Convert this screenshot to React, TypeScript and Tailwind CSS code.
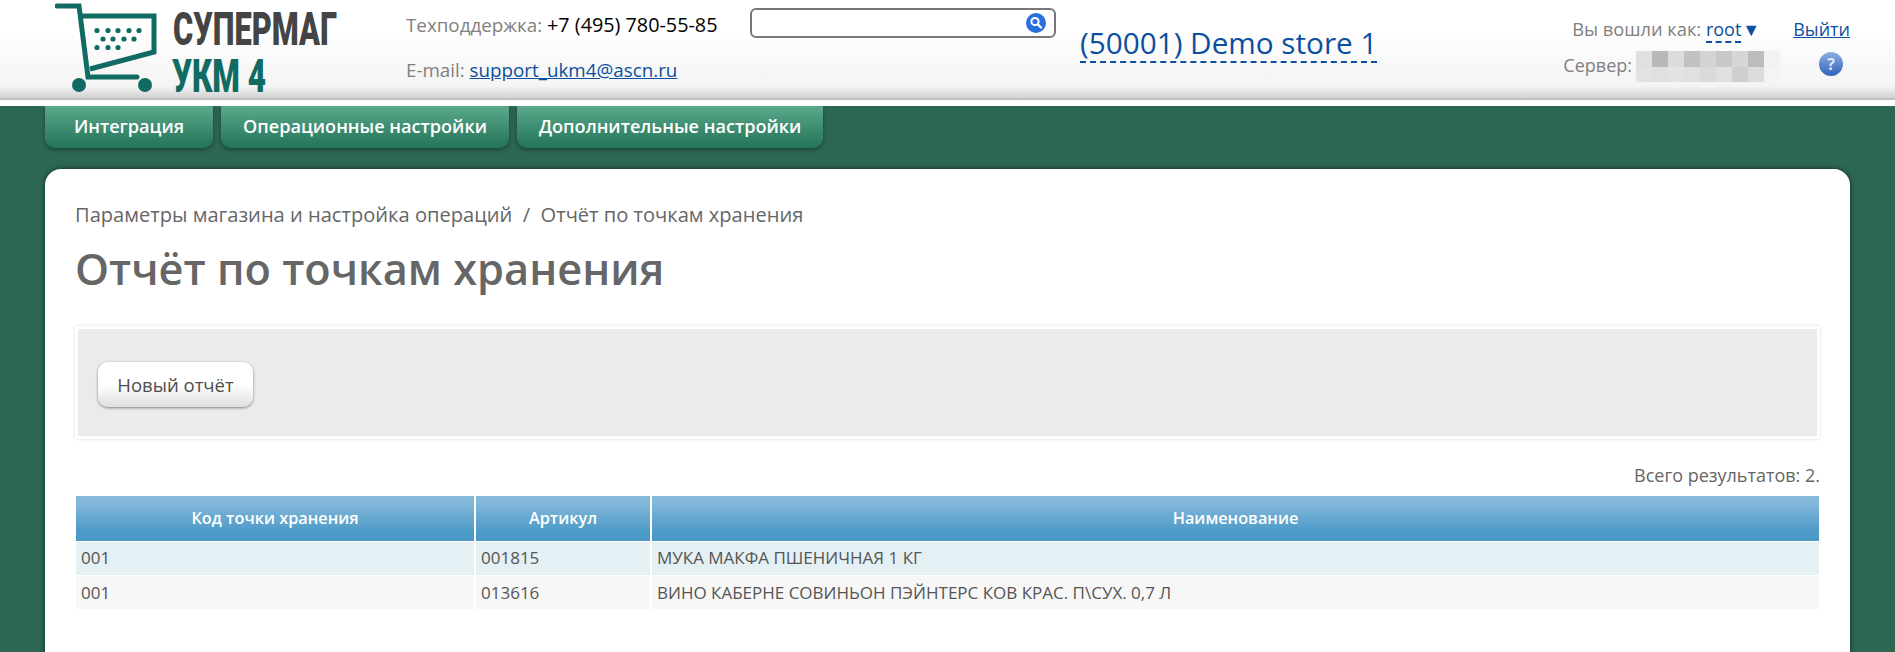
import React from 'react';

const blurCells = [
  ['#e0e0e0', '#b9b9b9', '#dcdcdc', '#c2c2c2', '#d4d4d4', '#c8c8c8', '#d6d6d6', '#bcbcbc', '#f2f2f2'],
  ['#e2e2e2', '#e0e0e0', '#e3e3e3', '#e0e0e0', '#dadada', '#e0e0e0', '#cfcfcf', '#dcdcdc', '#f4f4f4'],
];

const Logo = () => (
  <svg width="300" height="106" viewBox="0 0 300 106" className="shrink-0">
    <g fill="none" stroke="#126b62" strokeWidth="5" strokeLinecap="round">
      <path d="M2 6H24L33 77H82" />
      <path d="M26 16H99V52L35 69" strokeLinecap="butt" />
    </g>
    <g fill="#126b62">
      <circle cx="24" cy="85" r="7" />
      <circle cx="90" cy="85" r="7" />
      {[42, 53, 63, 74, 84].map(x => <circle key={x} cx={x} cy="30.5" r="2.6" />)}
      {[48, 58, 69, 79].map(x => <circle key={x} cx={x} cy="39" r="2.6" />)}
      {[42, 53, 63].map(x => <circle key={x} cx={x} cy="47.5" r="2.6" />)}
    </g>
    <text transform="translate(118 45) scale(0.67 1)" fontFamily="Roboto, sans-serif" fontWeight="900" fontSize="46" fill="#444444">СУПЕРМАГ</text>
    <text transform="translate(117 92) scale(0.67 1)" fontFamily="Roboto, sans-serif" fontWeight="900" fontSize="47" fill="#126b62">УКМ 4</text>
  </svg>
);

const Header = () => (
  <div className="relative h-[106px] bg-white">
    <div className="flex h-[100px] border-b-[2px] border-[#bfbfbf] bg-gradient-to-b from-white from-30% via-[#f4f4f4] via-88% to-[#d2d2d2] pl-[55px]">
      <Logo />
      <div className="ml-[51px] flex w-[344px] shrink-0 flex-col pt-[13px] text-[18.8px] text-[#808080]">
        <div className="h-[45px] leading-[24px]">
          Техподдержка: <span className="text-[19.8px] text-black">+7 (495) 780-55-85</span>
        </div>
        <div className="leading-[24px]">
          E-mail: <a className="text-[#0b4f9e] underline">support_ukm4@ascn.ru</a>
        </div>
      </div>
      <div className="mt-[8px] flex h-[30px] w-[306px] shrink-0 items-center justify-end rounded-[6px] border-2 border-[#777777] bg-white pr-[8px]">
        <svg width="20" height="20" viewBox="0 0 20 20">
          <circle cx="10" cy="10" r="10" fill="#2a6fdc" />
          <circle cx="9" cy="8.5" r="3.6" fill="none" stroke="#ffffff" strokeWidth="2" />
          <path d="M11.8 11.3L15 14.5" stroke="#ffffff" strokeWidth="2.4" strokeLinecap="round" />
        </svg>
      </div>
      <div className="ml-[24px] mt-[24px] h-[39px] shrink-0 border-b-2 border-dashed border-[#0b4f9e] text-[29.7px] leading-[38px] text-[#0b4f9e]">
        (50001) Demo store 1
      </div>
      <div className="ml-auto flex w-[332px] shrink-0 flex-col items-end pr-[45px] text-[18px] text-[#808080]">
        <div className="mt-[16px] flex h-[27px] items-start leading-[26px]">
          <span className="text-[18.3px]">Вы вошли как:&nbsp;</span>
          <span className="h-[27px] border-b-2 border-dashed border-[#0b4f9e] text-[#0b4f9e]">root</span>
          <span className="ml-[1px] text-[18px] text-[#0b4f9e]">▼</span>
          <a className="ml-[33px] text-[#0b4f9e] underline">Выйти</a>
        </div>
        <div className="mt-[8px] flex items-start">
          <span className="mr-[4px] mt-[2px] leading-[24px]">Сервер:</span>
          <div className="mr-[39px] grid h-[31px] w-[144px] grid-cols-9">
            {blurCells.flat().map((c, i) => (
              <div key={i} style={{ backgroundColor: c }} />
            ))}
          </div>
          <div className="mr-[7px] mt-[1px] flex h-[24px] w-[24px] items-center justify-center rounded-full bg-gradient-to-b from-[#8fb0e6] to-[#2f62b8] text-[16px] font-bold leading-none text-[#dfe8fa]">
            ?
          </div>
        </div>
      </div>
    </div>
  </div>
);

const tabs = ['Операционные настройки', 'Дополнительные настройки'];

const tabClass =
  'flex h-[42px] items-center justify-center rounded-b-[10px] bg-gradient-to-b from-[#5aa98b] to-[#22745a] text-[18.1px] font-semibold text-white shadow-[0_2px_4px_rgba(0,0,0,0.35)]';

const Tabs = () => (
  <div className="flex gap-[8px] pl-[45px]">
    <div className={`${tabClass} w-[168px]`}>Интеграция</div>
    {tabs.map(t => (
      <div key={t} className={`${tabClass} px-[22px]`}>
        {t}
      </div>
    ))}
  </div>
);

const rows = [
  ['001', '001815', 'МУКА МАКФА ПШЕНИЧНАЯ 1 КГ'],
  ['001', '013616', 'ВИНО КАБЕРНЕ СОВИНЬОН ПЭЙНТЕРС КОВ КРАС. П\\СУХ. 0,7 Л'],
];

const ReportTable = () => (
  <div className="px-[1px]">
    <table className="w-full table-fixed border-collapse text-[17px] text-[#555555]">
      <colgroup>
        <col className="w-[399px]" />
        <col className="w-[176px]" />
        <col />
      </colgroup>
      <thead>
        <tr className="h-[45px] bg-gradient-to-b from-[#86bada] from-10% to-[#4b9ac8] to-80% text-white">
          <th className="border-r-2 border-white text-[16.3px] font-semibold">Код точки хранения</th>
          <th className="border-r-2 border-white text-[16.3px] font-semibold">Артикул</th>
          <th className="text-[16.3px] font-semibold">Наименование</th>
        </tr>
      </thead>
      <tbody>
        {rows.map((r, i) => (
          <tr key={r[1]} className={`h-[34px] border-t border-white ${i === 0 ? 'bg-[#e4f0f4]' : 'bg-[#f7f7f7]'}`}>
            {r.map((c, j) => (
              <td key={j} className={`px-[5px] ${j < 2 ? 'border-r-2 border-white' : ''}`}>
                {c}
              </td>
            ))}
          </tr>
        ))}
      </tbody>
    </table>
  </div>
);

const App: React.FC = () => {
  return (
    <div className="h-[652px] overflow-hidden bg-[#2c6751] font-['Open_Sans',sans-serif]">
      <Header />
      <Tabs />
      <main className="ml-[45px] mr-[45px] mt-[21px] h-[600px] rounded-t-[16px] bg-white px-[30px] pt-[32px] shadow-[0_0_5px_rgba(0,0,0,0.6)]">
        <div className="text-[20.1px] leading-[28px] text-[#666666]">
          Параметры магазина и настройка операций&nbsp; /&nbsp; Отчёт по точкам хранения
        </div>
        <h1 className="mt-[13px] text-[43.3px] font-semibold leading-[54px] text-[#666666]">Отчёт по точкам хранения</h1>
        <div className="mt-[30px] h-[113px] border-[3px] border-white bg-[#ebebeb] pl-[20px] pt-[33px] shadow-[0_0_3px_rgba(0,0,0,0.14)]">
          <button className="h-[45px] w-[155px] rounded-[10px] bg-gradient-to-b from-white from-50% to-[#e0e0e0] text-[18.5px] text-[#4d4d4d] shadow-[0_1px_3px_rgba(0,0,0,0.45)]">
            Новый отчёт
          </button>
        </div>
        <div className="mt-[22px] h-[35px] text-right text-[18px] leading-[28px] text-[#666666]">Всего результатов: 2.</div>
        <ReportTable />
      </main>
    </div>
  );
};

export default App;
